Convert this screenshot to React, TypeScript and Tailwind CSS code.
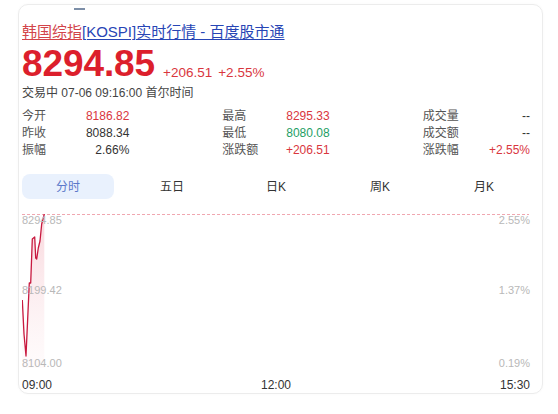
import React from "react";

const FONT = '"Liberation Sans", Arial, "Noto Sans CJK SC", sans-serif';

type Stat = { label: string; value: string; tone: "up" | "down" | "flat"; align: "right" | "left" };

const columns: Stat[][] = [
  [
    { label: "今开", value: "8186.82", tone: "up", align: "right" },
    { label: "昨收", value: "8088.34", tone: "flat", align: "right" },
    { label: "振幅", value: "2.66%", tone: "flat", align: "right" },
  ],
  [
    { label: "最高", value: "8295.33", tone: "up", align: "left" },
    { label: "最低", value: "8080.08", tone: "down", align: "left" },
    { label: "涨跌额", value: "+206.51", tone: "up", align: "left" },
  ],
  [
    { label: "成交量", value: "--", tone: "flat", align: "right" },
    { label: "成交额", value: "--", tone: "flat", align: "right" },
    { label: "涨跌幅", value: "+2.55%", tone: "up", align: "right" },
  ],
];

const toneClass = {
  up: "text-[#d9363e]",
  down: "text-[#1e9e64]",
  flat: "text-[#333333]",
};

const tabs = ["分时", "五日", "日K", "周K", "月K"];

// intraday price path, chart-local coordinates (507 x 154)
const linePts: [number, number][] = [
  [0.3, 86],
  [2, 120],
  [4, 142],
  [7.3, 69],
  [8.7, 69],
  [10.3, 25],
  [12.7, 23],
  [13.7, 44],
  [14.7, 45],
  [16.3, 34],
  [18, 27],
  [19.7, 10],
  [21.3, 4],
  [22.3, 0],
];

function Chart() {
  const d = linePts.map((p, i) => `${i ? "L" : "M"}${p[0]} ${p[1]}`).join(" ");
  const area = `${d} L22.3 154 L0.3 154 Z`;
  return (
    <div className="relative h-[154px] w-full">
      <svg className="absolute inset-0" width="507" height="154" viewBox="0 0 507 154">
        <defs>
          <linearGradient id="fill" x1="0" y1="0" x2="0" y2="1">
            <stop offset="0%" stopColor="#f3b5be" stopOpacity="0.55" />
            <stop offset="100%" stopColor="#fbe4e8" stopOpacity="0.15" />
          </linearGradient>
        </defs>
        <line x1="0" y1="0.5" x2="507" y2="0.5" stroke="#f0a7b0" strokeWidth="1" strokeDasharray="3 2" />
        <path d={area} fill="url(#fill)" />
        <path d={d} fill="none" stroke="#c8193f" strokeWidth="1.3" strokeLinejoin="round" />
      </svg>
      <div className="absolute left-0 top-[0px] text-[11px] leading-[12px] text-[#b8b8b8]">8294.85</div>
      <div className="absolute left-0 top-[70px] text-[11px] leading-[12px] text-[#b8b8b8]">8199.42</div>
      <div className="absolute left-0 top-[143px] text-[11px] leading-[12px] text-[#b8b8b8]">8104.00</div>
      <div className="absolute right-0 top-[0px] text-[11px] leading-[12px] text-[#b8b8b8]">2.55%</div>
      <div className="absolute right-0 top-[70px] text-[11px] leading-[12px] text-[#b8b8b8]">1.37%</div>
      <div className="absolute right-0 top-[143px] text-[11px] leading-[12px] text-[#b8b8b8]">0.19%</div>
    </div>
  );
}

export default function App() {
  return (
    <div className="h-[414px] w-[558px] bg-white" style={{ fontFamily: FONT }}>
      <div className="pl-[18px] pt-[4px]">
        <div className="relative h-[390px] w-[525px] rounded-[10px] border border-[#ececec] pl-[3px] pr-[12px] shadow-[0_0_3px_rgba(0,0,0,0.03)]">
          <div className="absolute left-[55px] top-[3px] h-[1.5px] w-[11px] bg-[#7d8fa8]" />
          <div className="pt-[16px] text-[15px] leading-[22px]">
            <span className="text-[#d2444a] underline decoration-1 underline-offset-2">韩国综指</span>
            <span className="text-[#2745b5] underline decoration-1 underline-offset-2">[KOSPI]实时行情 - 百度股市通</span>
          </div>
          <div className="mt-[3px] flex items-end">
            <span className="text-[37px] font-bold leading-[36px] tracking-[-0.1px] text-[#dc1f2c]">8294.85</span>
            <span className="mb-[1px] ml-[8px] text-[13.5px] leading-[16px] text-[#d9363e]">+206.51</span>
            <span className="mb-[1px] ml-[6px] text-[13.5px] leading-[16px] text-[#d9363e]">+2.55%</span>
          </div>
          <div className="mt-[3px] text-[12px] leading-[16px] text-[#444444]">交易中 07-06 09:16:00 首尔时间</div>
          <div className="mt-[7px] grid grid-cols-3 gap-x-[93px] text-[12px] leading-[17px]">
            {columns.map((col, ci) => (
              <div key={ci} className="flex flex-col">
                {col.map((s) => (
                  <div key={s.label} className="flex">
                    <span className="w-[64px] text-[#555555]">{s.label}</span>
                    <span className={`flex-1 ${s.align === "right" ? "text-right" : "text-left"} ${toneClass[s.tone]}`}>
                      {s.value}
                    </span>
                  </div>
                ))}
              </div>
            ))}
          </div>
          <div className="mt-[15px] flex gap-[12px]">
            {tabs.map((t, i) => (
              <div
                key={t}
                className={`flex h-[25px] w-[92px] items-center justify-center rounded-[8px] text-[12px] ${
                  i === 0 ? "bg-[#e9f1fd] text-[#5b78c9]" : "text-[#333333]"
                }`}
              >
                {t}
              </div>
            ))}
          </div>
          <div className="mt-[15px]">
            <Chart />
          </div>
          <div className="mt-[9px] flex justify-between text-[12px] leading-[16px] text-[#333333]">
            <span>09:00</span>
            <span>12:00</span>
            <span>15:30</span>
          </div>
        </div>
      </div>
    </div>
  );
}
